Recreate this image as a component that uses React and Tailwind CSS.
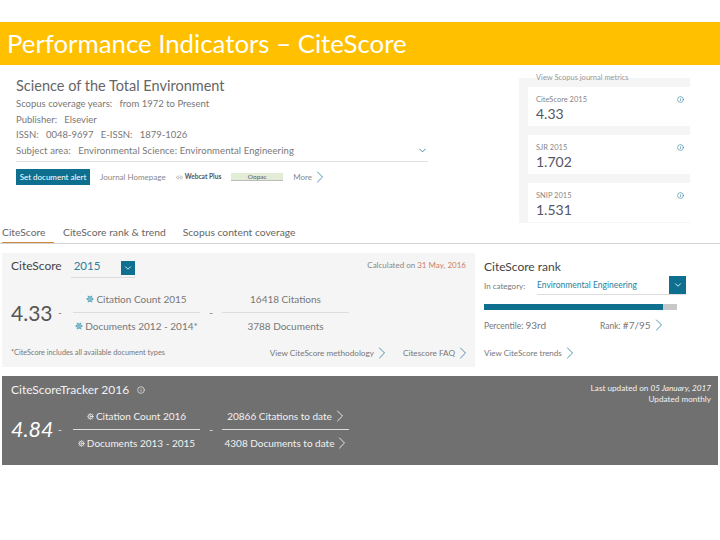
import { ChevronDown, ChevronRight, Info, Snowflake, Cog, Link2 } from 'lucide-react';

const metrics = [
  { label: 'CiteScore 2015', value: '4.33' },
  { label: 'SJR 2015', value: '1.702' },
  { label: 'SNIP 2015', value: '1.531' },
];

const tabs = ['CiteScore', 'CiteScore rank & trend', 'Scopus content coverage'];

function More({ className = 'text-[#2a7f9e]' }) {
  return <ChevronRight size={20} strokeWidth={1} className={`-ml-[2px] -mr-[6px] shrink-0 ${className}`} />;
}

function Journal() {
  return (
    <div className="w-[519px] shrink-0 pl-4 pt-3">
      <h2 className="text-[14.5px] leading-[18px] text-[#666]">Science of the Total Environment</h2>
      <div className="mt-[1px] w-[412px] text-[9.5px] leading-[15.6px] text-[#777]">
        <p>Scopus coverage years: &nbsp; from 1972 to Present</p>
        <p>Publisher: &nbsp; Elsevier</p>
        <p>ISSN: &nbsp; 0048-9697 &nbsp; E-ISSN: &nbsp; 1879-1026</p>
        <div className="flex items-center justify-between border-b border-[#e2e2e2] pb-[3px]">
          <p className="tracking-[0.1px]">Subject area: &nbsp; Environmental Science: Environmental Engineering</p>
          <ChevronDown size={11} className="text-[#3b7f99]" />
        </div>
      </div>
      <div className="mt-[5px] flex items-center text-[8px] text-[#888]">
        <span className="flex h-[16px] w-[74px] items-center justify-center bg-[#0f6f8f] text-[8px] text-white">Set document alert</span>
        <span className="ml-[10px]">Journal Homepage</span>
        <span className="ml-[10px] flex items-center gap-[2px] text-[6.6px] font-bold text-[#555]">
          <Link2 size={7} className="text-[#999]" />
          Webcat Plus
        </span>
        <span className="ml-[10px] flex h-[8px] w-[52px] items-center justify-center border-b border-[#bbb] bg-[#e3ecd4] text-[6.5px] text-[#557]">Oopac</span>
        <span className="ml-[10px]">More</span>
        <More />
      </div>
    </div>
  );
}

function Metrics() {
  return (
    <div className="mt-[13px] h-[145px] w-[171px] bg-[#f5f5f5] pl-[9px]">
      <p className="-mt-[3px] ml-2 h-[5px] text-[7.5px] leading-[5px] text-[#999]">View Scopus journal metrics</p>
      <div className="mt-[7px] flex flex-col gap-[9px]">
        {metrics.map((m) => (
          <div key={m.label} className="flex h-[39px] items-start justify-between bg-white pl-2 pr-[6px] pt-2">
            <div>
              <p className="text-[7.5px] leading-[10px] text-[#888]">{m.label}</p>
              <p className="text-[14px] leading-[17px] text-[#556]">{m.value}</p>
            </div>
            <Info size={7} className="mt-[1px] text-[#2a7f9e]" />
          </div>
        ))}
      </div>
    </div>
  );
}

function Fraction({ numerator, denominator }) {
  return (
    <div className="flex w-[127px] flex-col items-center">
      <div className="flex h-[14px] w-full items-center justify-center whitespace-nowrap">{numerator}</div>
      <div className="mt-[6px] w-full border-t border-[#ddd]" />
      <div className="mt-[6px] flex h-[14px] w-full items-center justify-center whitespace-nowrap">{denominator}</div>
    </div>
  );
}

function CiteScorePanel() {
  return (
    <div className="flex h-[114px] w-[473px] shrink-0 flex-col bg-[#f5f5f5] px-[9px] pt-[6px]">
      <div className="flex items-start justify-between">
        <div className="flex items-start">
          <span className="text-[12px] leading-[14px] text-[#444]">CiteScore</span>
          <div className="ml-[9px] flex w-[64px] items-start justify-between border-b border-[#ddd] pb-[2px] pl-[3px]">
            <span className="text-[11.5px] leading-[14px] text-[#2a7f9e]">2015</span>
            <span className="mt-[2px] flex h-[14px] w-[14px] items-center justify-center bg-[#0f6f8f]">
              <ChevronDown size={10} className="text-white" />
            </span>
          </div>
        </div>
        <span className="text-[8px] text-[#888]">
          Calculated on <span className="text-[#c9806a]">31 May, 2016</span>
        </span>
      </div>
      <div className="mt-[14px] flex items-center text-[10px] text-[#777]">
        <span className="w-[47px] text-[21px] leading-none text-[#555]">4.33</span>
        <span className="w-[15px]">-</span>
        <Fraction
          numerator={<><Snowflake size={8} className="mr-[2px] text-[#2a8fb0]" />Citation Count 2015</>}
          denominator={<><Snowflake size={8} className="mr-[2px] text-[#2a8fb0]" />Documents 2012 - 2014*</>}
        />
        <span className="w-[22px] text-center">-</span>
        <Fraction numerator="16418 Citations" denominator="3788 Documents" />
      </div>
      <div className="mt-[10px] flex items-center justify-between text-[#777]">
        <span className="text-[7.3px]">*CiteScore includes all available document types</span>
        <div className="-mr-[1px] flex items-center text-[8.2px]">
          <span>View CiteScore methodology</span>
          <More />
          <span className="ml-[17px]">Citescore FAQ</span>
          <More />
        </div>
      </div>
    </div>
  );
}

function RankPanel() {
  return (
    <div className="ml-[9px] w-[202px] pt-[6px] text-[#777]">
      <p className="text-[12px] leading-[15px] text-[#444]">CiteScore rank</p>
      <div className="mt-[2px] flex items-center text-[8px]">
        <span className="w-[53px]">In category:</span>
        <div className="flex h-[19px] w-[149px] items-center justify-between border-b border-[#ddd]">
          <span className="text-[8.5px] text-[#2a7f9e]">Environmental Engineering</span>
          <span className="flex h-[18px] w-[17px] items-center justify-center bg-[#0f6f8f]">
            <ChevronDown size={10} className="text-white" />
          </span>
        </div>
      </div>
      <div className="mt-[9px] h-[6px] w-[193px] bg-[#c8c8c8]">
        <div className="h-full w-[179px] bg-[#0f6f8f]" />
      </div>
      <div className="mt-[7px] flex h-[16px] items-center text-[8.5px]">
        <span className="w-[116px]">Percentile: <span className="text-[10px]">93rd</span></span>
        <span>Rank: <span className="text-[10px]">#7/95</span></span>
        <More />
      </div>
      <div className="mt-[10px] flex items-center text-[8px]">
        <span>View CiteScore trends</span>
        <More />
      </div>
    </div>
  );
}

function Tracker() {
  return (
    <div className="mx-[2px] mt-[9px] h-[89px] bg-[#707070] pl-[9px] pr-[7px] pt-[6px] text-[#f2f2f2]">
      <div className="flex items-start justify-between">
        <div className="flex items-center pt-[1px] text-[12px] leading-[14px]">
          CiteScoreTracker 2016
          <Info size={8} className="ml-2" />
        </div>
        <div className="mt-[1px] text-right text-[8.2px] leading-[11px]">
          <p>Last updated on <em>05 January, 2017</em></p>
          <p>Updated monthly</p>
        </div>
      </div>
      <div className="mt-[4px] flex items-center text-[10px]">
        <span className="w-[47px] text-[21.5px] italic leading-none text-white">4.84</span>
        <span className="w-[15px]">-</span>
        <Fraction
          numerator={<><Cog size={7} className="mr-[2px]" />Citation Count 2016</>}
          denominator={<><Cog size={7} className="mr-[2px]" />Documents 2013 - 2015</>}
        />
        <span className="w-[22px] text-center">-</span>
        <Fraction
          numerator={<>20866 Citations to date<More className="text-white" /></>}
          denominator={<>4308 Documents to date<More className="text-white" /></>}
        />
      </div>
    </div>
  );
}

export default function App() {
  return (
    <div className="h-[540px] w-[720px] overflow-hidden bg-white pt-[22px] font-['Lato','Liberation_Sans',sans-serif]">
      <h1 className="flex h-[43px] items-center bg-[#ffc000] pl-[7px] pt-[1px] text-[25.8px] leading-none text-white">
        Performance Indicators – CiteScore
      </h1>

      <div className="flex h-[157px]">
        <Journal />
        <Metrics />
      </div>

      <div className="flex h-[22px] items-end border-b border-[#d4d4d4] pl-[2px] text-[10.3px] text-[#666]">
        {tabs.map((t, i) => (
          <span
            key={t}
            className={i === 0 ? 'mr-[9px] h-full w-[52px] border-b border-[#d08a3c] pt-[3px]' : 'mr-[17px] h-full pt-[3px]'}
          >
            {t}
          </span>
        ))}
      </div>

      <div className="mt-[9px] flex pl-[2px]">
        <CiteScorePanel />
        <RankPanel />
      </div>

      <Tracker />
    </div>
  );
}
